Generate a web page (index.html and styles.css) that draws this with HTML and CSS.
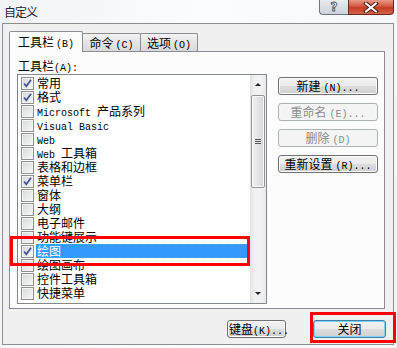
FILE: index.html
```html
<!DOCTYPE html>
<html lang="zh-CN">
<head>
  <meta charset="UTF-8">
  <title>自定义</title>
  <link rel="stylesheet" href="styles.css">
</head>
<body>

<div class="window">
  <div class="titlebar">
    <div class="title">自定义</div>
    <div class="caption-btns">
      <div class="cap help">?</div>
      <div class="cap close">
        <svg width="16" height="11" viewBox="0 0 16 11">
          <path d="M3 1.5 L13 9.5 M13 1.5 L3 9.5" stroke="#4a1a14" stroke-width="4" stroke-linecap="square"/>
          <path d="M3 1.5 L13 9.5 M13 1.5 L3 9.5" stroke="#ffffff" stroke-width="2" stroke-linecap="square"/>
        </svg>
      </div>
    </div>
  </div>

  <div class="client">
    <div class="tabs">
      <div class="tab active">工具栏<span class="lat">(B)</span></div>
      <div class="tab">命令<span class="lat">(C)</span></div>
      <div class="tab">选项<span class="lat">(O)</span></div>
    </div>

    <div class="panel">
      <div class="label">工具栏<span class="lat">(A):</span></div>

      <div class="listbox">
        <div class="rows">
          <div class="row"><span class="chk on"></span><span class="txt">常用</span></div>
          <div class="row"><span class="chk on"></span><span class="txt">格式</span></div>
          <div class="row"><span class="chk"></span><span class="txt"><span class="lat">Microsoft </span>产品系列</span></div>
          <div class="row"><span class="chk"></span><span class="txt"><span class="lat">Visual Basic</span></span></div>
          <div class="row"><span class="chk"></span><span class="txt"><span class="lat">Web</span></span></div>
          <div class="row"><span class="chk"></span><span class="txt"><span class="lat">Web </span>工具箱</span></div>
          <div class="row"><span class="chk"></span><span class="txt">表格和边框</span></div>
          <div class="row"><span class="chk on"></span><span class="txt">菜单栏</span></div>
          <div class="row"><span class="chk"></span><span class="txt">窗体</span></div>
          <div class="row"><span class="chk"></span><span class="txt">大纲</span></div>
          <div class="row"><span class="chk"></span><span class="txt">电子邮件</span></div>
          <div class="row"><span class="chk"></span><span class="txt">功能键展示</span></div>
          <div class="row selected"><span class="chk on"></span><span class="txt">绘图</span></div>
          <div class="row"><span class="chk"></span><span class="txt">绘图画布</span></div>
          <div class="row"><span class="chk"></span><span class="txt">控件工具箱</span></div>
          <div class="row"><span class="chk"></span><span class="txt">快捷菜单</span></div>
        </div>
        <div class="scrollbar">
          <div class="arrow up"></div>
          <div class="track">
            <div class="thumb"><span class="grip"></span></div>
          </div>
          <div class="arrow down"></div>
        </div>
      </div>

      <div class="side-btns">
        <div class="btn">新建<span class="lat">(N)...</span></div>
        <div class="btn disabled">重命名<span class="lat">(E)...</span></div>
        <div class="btn disabled">删除<span class="lat">(D)</span></div>
        <div class="btn">重新设置<span class="lat">(R)...</span></div>
      </div>
    </div>

    <div class="footer">
      <div class="btn keyboard">键盘<span class="lat">(K)...</span></div>
      <div class="btn default closebtn">关闭</div>
    </div>
  </div>

  <div class="mark mark-row"></div>
  <div class="mark mark-close"></div>
</div>

</body>
</html>
```

FILE: styles.css
```css
* {
  box-sizing: border-box;
}

body {
  margin: 0;
  font-family: "Noto Sans CJK SC", "Noto Sans", sans-serif;
  font-size: 12px;
  color: #000;
}

.lat {
  font-family: "Liberation Mono", monospace;
  font-size: 10px;
}

.window {
  position: relative;
  width: 397px;
  height: 348px;
  background: linear-gradient(100deg, #f1f3f6 0%, #fbfcfd 45%, #f3f5f8 100%);
  padding: 0 3px 0 2px;
}

/* title bar */
.titlebar {
  height: 23px;
  display: flex;
  justify-content: space-between;
  align-items: flex-start;
}

.title {
  padding: 4px 0 0 2px;
  line-height: 15px;
  font-size: 12px;
  letter-spacing: -1px;
  color: #1b2233;
  text-shadow: 0 0 3px #fff;
}

.caption-btns {
  display: flex;
}

.cap {
  height: 15px;
  border: 1px solid #6d7481;
  border-top: none;
  display: flex;
  justify-content: center;
  align-items: center;
}

.help {
  width: 29px;
  border-radius: 0 0 0 4px;
  border-right: none;
  background: linear-gradient(#e9ecf0, #cdd2da);
  color: #f8f8f8;
  font-family: "DejaVu Sans", sans-serif;
  font-weight: bold;
  font-size: 12px;
  line-height: 13px;
  -webkit-text-stroke: 0.8px #4c5260;
}

.close {
  width: 46px;
  border-color: #6e2a20;
  border-radius: 0 0 4px 0;
  background: linear-gradient(#e79a87 0%, #d4573f 45%, #c43d24 55%, #d4644a 100%);
}

/* client area */
.client {
  height: 322px;
  border: 1px solid #8d8d8d;
  background: #f0f0f0;
  padding: 7px 8px 6px 6px;
}

.tabs {
  display: flex;
  height: 20px;
  align-items: flex-end;
  position: relative;
  z-index: 1;
}

.tab {
  height: 18px;
  border: 1px solid #898c95;
  border-bottom: none;
  border-radius: 2px 2px 0 0;
  background: linear-gradient(#f3f3f3, #e4e4e4 50%, #d9d9d9);
  text-align: center;
  line-height: 17px;
  margin-left: -1px;
  white-space: nowrap;
}

.tab:nth-child(2) {
  width: 59px;
}

.tab:nth-child(3) {
  width: 58px;
}

.tab .lat {
  margin-left: 2px;
}

.tab.active {
  width: 74px;
  height: 21px;
  margin-left: 0;
  margin-bottom: -1px;
  background: #fcfcfc;
  line-height: 19px;
  z-index: 2;
  position: relative;
}

.panel {
  height: 258px;
  border: 1px solid #898c95;
  background: #fcfcfc;
  padding: 7px 0 4px 7px;
  display: grid;
  grid-template-columns: 250px 100px;
  grid-template-rows: 15px 230px;
  column-gap: 11px;
}

.label {
  line-height: 14px;
  padding-left: 1px;
}

/* list box */
.listbox {
  grid-column: 1;
  grid-row: 2;
  border: 1px solid #828790;
  background: #fff;
  display: flex;
}

.rows {
  flex: 1;
  padding-top: 1px;
}

.row {
  height: 14px;
  display: flex;
  align-items: center;
  padding-left: 3px;
}

.chk {
  width: 13px;
  height: 13px;
  border: 1px solid #8f8f8f;
  background: linear-gradient(135deg, #d4d7db, #f7f7f7);
  box-shadow: inset 0 0 0 1px #f4f4f4;
  margin-right: 2px;
  flex: none;
}

.chk.on {
  background:
    url("data:image/svg+xml;utf8,<svg xmlns='http://www.w3.org/2000/svg' width='11' height='11'><path d='M2 5.5 L4.3 8.3 L9 1.8' fill='none' stroke='%23415590' stroke-width='1.7'/></svg>") center no-repeat,
    linear-gradient(135deg, #d4d7db, #f7f7f7);
}

.txt {
  height: 14px;
  line-height: 14px;
  white-space: nowrap;
  padding-left: 1px;
}

.row.selected .txt {
  flex: 1;
  background: #3399ff;
  color: #fff;
  border-top: 1px dotted #c9863a;
  border-bottom: 1px dotted #c9863a;
  line-height: 12px;
}

.scrollbar {
  width: 16px;
  display: flex;
  flex-direction: column;
  background: linear-gradient(90deg, #e3e3e3, #f2f2f2 30%, #f2f2f2 70%, #e8e8e8);
}

.arrow {
  height: 19px;
  position: relative;
}

.arrow::after {
  content: "";
  position: absolute;
  left: 5px;
  border-left: 3px solid transparent;
  border-right: 3px solid transparent;
}

.arrow.up::after {
  top: 8px;
  border-bottom: 3px solid #222;
}

.arrow.down::after {
  bottom: 8px;
  border-top: 3px solid #222;
}

.track {
  flex: 1;
  padding: 1px 1px 0;
}

.thumb {
  height: 93px;
  border: 1px solid #979797;
  border-radius: 2px;
  background: linear-gradient(90deg, #f2f2f2, #e4e4e4 50%, #d6d6d6);
  box-shadow: inset 0 0 0 1px #fafafa;
  display: flex;
  justify-content: center;
  align-items: center;
}

.grip {
  width: 6px;
  height: 5px;
  border-top: 1px solid #555;
  border-bottom: 1px solid #555;
  position: relative;
}

.grip::after {
  content: "";
  position: absolute;
  left: 0;
  right: 0;
  top: 1px;
  border-top: 1px solid #555;
}

/* buttons */
.side-btns {
  grid-column: 2;
  grid-row: 2;
  display: flex;
  flex-direction: column;
  gap: 8px;
  padding-top: 3px;
}

.btn {
  height: 18px;
  border: 1px solid #707070;
  border-radius: 3px;
  background: linear-gradient(#f2f2f2 0%, #ebebeb 48%, #dddddd 52%, #cfcfcf 100%);
  box-shadow: inset 0 0 0 1px #fbfbfb;
  text-align: center;
  line-height: 15px;
  white-space: nowrap;
}

.btn .lat {
  margin-left: 3px;
}

.btn.disabled {
  border-color: #adb2b5;
  background: #f4f4f4;
  box-shadow: none;
  color: #8b8b8b;
}

.footer {
  margin-top: 11px;
  display: flex;
  justify-content: flex-end;
  gap: 27px;
}

.keyboard {
  width: 59px;
  padding-left: 1px;
}

.keyboard .lat {
  margin-left: 0;
}

.closebtn {
  width: 73px;
  margin-right: -1px;
}

.btn.default {
  border-color: #3c7fb1;
  box-shadow: inset 0 0 0 1px #7ed3f7;
}

/* red annotation boxes */
.mark {
  position: absolute;
  border: 3px solid #ff0000;
  z-index: 5;
}

.mark-row {
  left: 10px;
  top: 236px;
  width: 240px;
  height: 30px;
}

.mark-close {
  left: 310px;
  top: 312px;
  width: 86px;
  height: 31px;
}
```
